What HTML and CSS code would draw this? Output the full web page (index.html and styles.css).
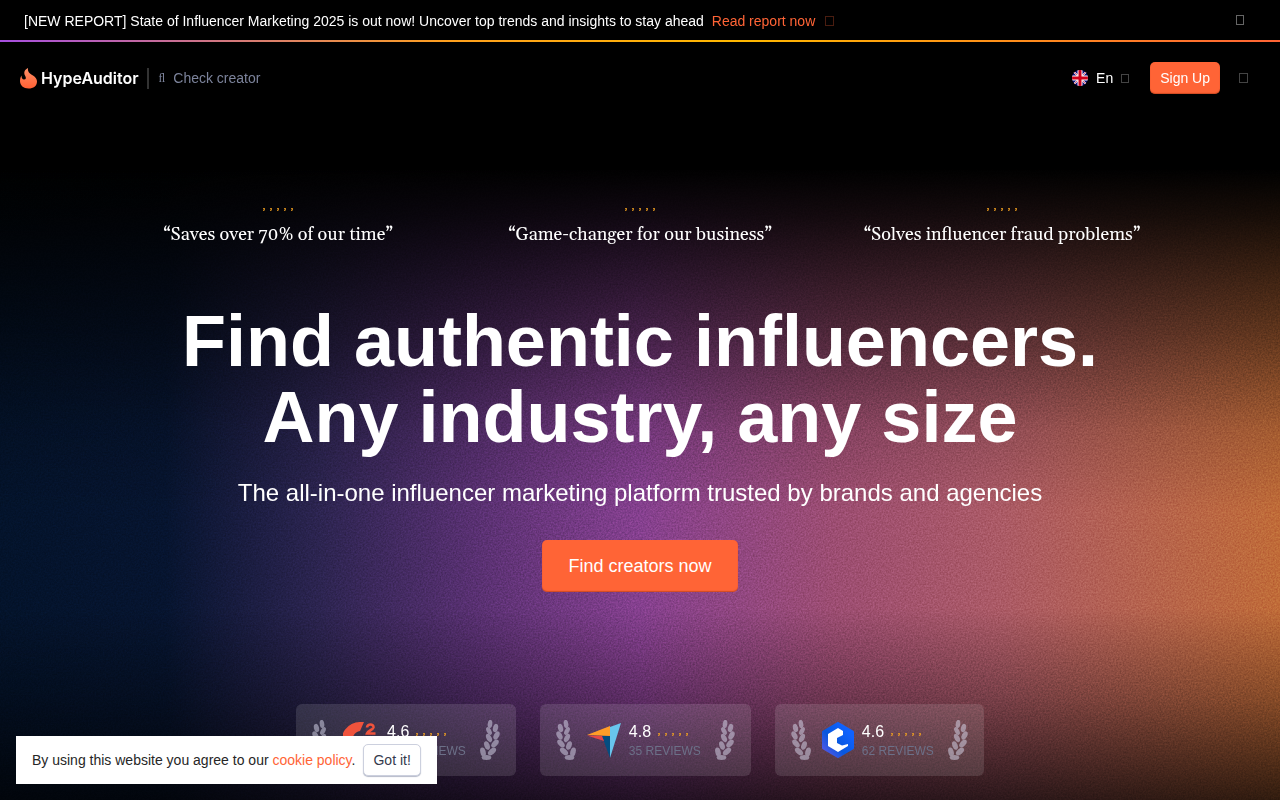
FILE: index.html
```html
<!DOCTYPE html>
<html lang="en">
<head>
    <meta charset="UTF-8">
    <meta name="viewport" content="width=device-width, initial-scale=1.0">
    <title>HypeAuditor</title>
    <link rel="stylesheet" href="styles.css">
</head>
<body>
    <!-- shared shapes -->
    <svg class="sprite" aria-hidden="true">
        <symbol id="laurel" viewBox="0 0 20 40">
            <ellipse cx="9.500" cy="4" rx="2.300" ry="4.200" transform="rotate(-8 9.500 4)"/>
            <ellipse cx="4" cy="8" rx="2.500" ry="4.200" transform="rotate(-15 4 8)"/>
            <ellipse cx="10.500" cy="11" rx="2.300" ry="4.200" transform="rotate(28 10.500 11)"/>
            <ellipse cx="3" cy="15.500" rx="2.600" ry="4.400" transform="rotate(-28 3 15.500)"/>
            <ellipse cx="10.500" cy="18" rx="2.500" ry="4.400" transform="rotate(28 10.500 18)"/>
            <ellipse cx="4.500" cy="23.500" rx="2.700" ry="4.600" transform="rotate(-42 4.500 23.500)"/>
            <ellipse cx="12.500" cy="25.500" rx="2.600" ry="4.400" transform="rotate(20 12.500 25.500)"/>
            <ellipse cx="7.500" cy="31.500" rx="2.800" ry="4.800" transform="rotate(-48 7.500 31.500)"/>
            <ellipse cx="16.500" cy="32" rx="2.700" ry="4.600" transform="rotate(14 16.500 32)"/>
            <ellipse cx="13" cy="37.500" rx="4.800" ry="2.500"/>
        </symbol>
        <symbol id="stars" viewBox="0 0 32 4">
            <path d="M1 0h2v2l-1 1h-1v-1h1l-1-1zM8 0h2v2l-1 1h-1v-1h1l-1-1zM15 0h2v2l-1 1h-1v-1h1l-1-1zM22 0h2v2l-1 1h-1v-1h1l-1-1zM29 0h2v2l-1 1h-1v-1h1l-1-1z"/>
        </symbol>
    </svg>

    <div class="promo">
        <p>[NEW REPORT] State of Influencer Marketing 2025 is out now! Uncover top trends and insights to stay ahead <a href="#">Read report now<span class="box box-orange"></span></a></p>
        <button class="icon-btn" aria-label="Close"><span class="box box-close"></span></button>
    </div>

    <header class="header">
        <a class="logo" href="#">
            <svg width="17" height="21" viewBox="0 0 17 21">
                <defs>
                    <linearGradient id="fire" x1="0" y1="0" x2="0" y2="1">
                        <stop offset="0" stop-color="#ff9068"/>
                        <stop offset="1" stop-color="#ff6033"/>
                    </linearGradient>
                </defs>
                <path fill="url(#fire)" d="M8 0C7.500 4 9.500 5.500 13 7.500C15.500 9 17 11 17 13.500C17 18 13.500 20.500 8.500 20.500C3.500 20.500 0 17.500 0 13C0 11 .5 9 1.500 7.500C1.500 10 2.500 11.500 4 11.500C6 11.500 6.500 10 5 7.500C3.500 4.500 4.500 1.500 8 0Z"/>
            </svg>
            <span>HypeAuditor</span>
        </a>
        <a class="check" href="#"><span class="search">&#xFB02;</span>Check creator</a>
        <nav class="nav">
            <button class="lang">
                <svg width="16" height="16" viewBox="0 0 16 16">
                    <clipPath id="round"><circle cx="8" cy="8" r="8"/></clipPath>
                    <g clip-path="url(#round)">
                        <path fill="#10107a" d="M0 0h16v16H0z"/>
                        <path stroke="#fff" stroke-width="1.800" d="M0 0l16 16M16 0L0 16"/>
                        <path stroke="#d80027" stroke-width=".6" d="M0 0l16 16M16 0L0 16"/>
                        <path stroke="#fff" stroke-width="5" d="M8 0v16M0 8h16"/>
                        <path stroke="#d0001a" stroke-width="3" d="M8 0v16M0 8h16"/>
                    </g>
                </svg>
                En<span class="box"></span>
            </button>
            <a class="btn signup" href="#">Sign Up</a>
            <button class="icon-btn" aria-label="Menu"><span class="box box-menu"></span></button>
        </nav>
    </header>

    <main class="hero">
        <svg class="grain" aria-hidden="true">
            <filter id="noise" color-interpolation-filters="sRGB">
                <feTurbulence type="fractalNoise" baseFrequency="0.6" numOctaves="2"/>
                <feColorMatrix type="matrix" values="1 0 0 0 0  1 0 0 0 0  1 0 0 0 0  0 0 0 0 1"/>
            </filter>
            <rect width="100%" height="100%" filter="url(#noise)"/>
        </svg>
        <div class="quotes">
            <div class="quote"><svg class="stars"><use href="#stars"/></svg><p>“Saves over 70% of our time”</p></div>
            <div class="quote"><svg class="stars"><use href="#stars"/></svg><p>“Game-changer for our business”</p></div>
            <div class="quote"><svg class="stars"><use href="#stars"/></svg><p>“Solves influencer fraud problems”</p></div>
        </div>
        <h1>Find authentic influencers.<br>Any industry, any size</h1>
        <p class="subtitle">The all-in-one influencer marketing platform trusted by brands and agencies</p>
        <a class="btn cta" href="#">Find creators now</a>
        <div class="badges">
            <div class="badge">
                <svg class="laurel"><use href="#laurel"/></svg>
                <svg class="brand brand-wide" viewBox="0 0 36 38">
                    <path fill="#f0533c" d="M21 1L17 10A9 9 0 1 0 24 26L28 33A18 18 0 1 1 17 1Z"/>
                    <path fill="none" stroke="#f0533c" stroke-width="2.600" d="M24 6.500C24 2.500 31 2.500 30.500 6.500C30 9 25 9.500 24 12.500H32.500"/>
                </svg>
                <div class="score"><p>4.6<svg class="stars"><use href="#stars"/></svg></p><small>246 REVIEWS</small></div>
                <svg class="laurel flip"><use href="#laurel"/></svg>
            </div>
            <div class="badge">
                <svg class="laurel"><use href="#laurel"/></svg>
                <svg class="brand" viewBox="0 0 34 38">
                    <path fill="#ff9d28" d="M0 14L23 5V15Z"/>
                    <path fill="#68c5ed" d="M34 2L23 6V37Z"/>
                    <path fill="#044d80" d="M15 15H23V37Z"/>
                    <path fill="#e54747" d="M0 14.500L15 15L17 20Z"/>
                </svg>
                <div class="score"><p>4.8<svg class="stars"><use href="#stars"/></svg></p><small>35 REVIEWS</small></div>
                <svg class="laurel flip"><use href="#laurel"/></svg>
            </div>
            <div class="badge">
                <svg class="laurel"><use href="#laurel"/></svg>
                <svg class="brand brand-narrow" viewBox="1 0 32 38">
                    <defs>
                        <linearGradient id="hex" x1="1" y1="0" x2="0" y2="1">
                            <stop offset=".2" stop-color="#0f62fe"/>
                            <stop offset=".6" stop-color="#0757dd"/>
                            <stop offset="1" stop-color="#6457e8"/>
                        </linearGradient>
                    </defs>
                    <path fill="url(#hex)" stroke="url(#hex)" stroke-width="3" stroke-linejoin="round" d="M17 2.500L31.500 11V27L17 35.500L2.500 27V11Z"/>
                    <path fill="#fff" d="M17 7L22 10V14L16 17V22L21 24.500L27 23V25L17 31L7 25V13Z"/>
                </svg>
                <div class="score"><p>4.6<svg class="stars"><use href="#stars"/></svg></p><small>62 REVIEWS</small></div>
                <svg class="laurel flip"><use href="#laurel"/></svg>
            </div>
        </div>
    </main>

    <div class="cookie">
        <p>By using this website you agree to our <a href="#">cookie policy</a>.</p>
        <button>Got it!</button>
    </div>
</body>
</html>
```
FILE: styles.css
```css
* {
    box-sizing: border-box;
}
body {
    margin: 0;
    background: #000;
    color: #fff;
    font-family: "Liberation Sans", Arial, sans-serif;
    font-size: 14px;
    line-height: 20px;
}
p, h1 {
    margin: 0;
}
a {
    color: #ff6436;
    text-decoration: none;
}
button {
    font: inherit;
    color: inherit;
    cursor: pointer;
}
.sprite {
    position: absolute;
    width: 0;
    height: 0;
}

/* Empty icon boxes */
.box {
    display: inline-block;
    width: 8px;
    height: 9px;
    border: 1px solid #444;
}
.box-orange {
    width: 9px;
    height: 10px;
    margin-left: 10px;
    border-color: #4a1d10;
}
.box-close {
    height: 10px;
    border-color: #666;
}
.box-menu {
    width: 9px;
    height: 10px;
}
.icon-btn {
    display: flex;
    padding: 0;
    background: none;
    border: none;
}

/* Top banner */
.promo {
    display: flex;
    align-items: center;
    justify-content: space-between;
    height: 42px;
    padding: 0 36px 0 24px;
    border-bottom: 2px solid;
    border-image: linear-gradient(90deg, #a64ee0, #ffa01e 35%, #ffb800 58%, #ff6436) 1;
}
.promo p {
    padding-top: 2px;
}
.promo a {
    margin-left: 4px;
}

/* Header */
.header {
    display: flex;
    align-items: center;
    height: 72px;
    padding: 0 32px 0 20px;
}
.logo {
    display: flex;
    align-items: center;
    gap: 4px;
    padding-right: 8px;
    border-right: 2px solid #333;
    color: #fff;
    font-family: Inter, sans-serif;
    font-size: 16px;
    font-weight: 600;
}
.check {
    display: flex;
    gap: 8px;
    margin-left: 10px;
    color: #7c839b;
}
.search {
    font-family: "Liberation Serif", serif;
    font-size: 12px;
}
.nav {
    display: flex;
    align-items: center;
    gap: 19px;
    margin-left: auto;
}
.lang {
    display: flex;
    align-items: center;
    gap: 8px;
    padding: 0 2px 0 0;
    background: none;
    border: none;
}
.btn {
    background: #ff6436;
    border-radius: 5px;
    box-shadow: inset 0 -1px 1px rgba(160, 50, 15, 0.5);
    color: #fff;
    text-align: center;
}
.signup {
    padding: 6px 10px;
}

/* Hero */
.hero {
    position: relative;
    display: flex;
    flex-direction: column;
    align-items: center;
    padding: 88px 24px 24px;
    background:
        linear-gradient(180deg, #000 8%, rgba(0, 0, 0, 0.88) 15%, rgba(0, 0, 0, 0.5) 32%, rgba(0, 0, 0, 0.15) 46%, rgba(0, 0, 0, 0) 58%, rgba(0, 0, 0, 0) 72%, rgba(0, 0, 0, 0.3) 85%, rgba(0, 0, 0, 0.75) 100%),
        linear-gradient(90deg, #03132b 0%, #06142f 13%, #2c2450 25%, #583071 37%, #85408f 50%, #9c4d72 65%, #ab5a66 78%, #b86548 92%, #c06b38 100%);
}
/* keeps the content above the grain */
.hero > * {
    position: relative;
}
.hero > .grain {
    position: absolute;
    inset: 0;
    width: 100%;
    height: 100%;
    opacity: 0.25;
    mix-blend-mode: overlay;
}
.quotes {
    display: grid;
    grid-template-columns: repeat(3, 1fr);
    width: 100%;
    max-width: 1086px;
}
.quote {
    display: flex;
    flex-direction: column;
    align-items: center;
    gap: 9px;
    padding-top: 6px;
    font-family: Gelasio, Georgia, "Liberation Serif", serif;
    font-size: 18px;
    line-height: 28px;
}
.stars {
    width: 32px;
    height: 4px;
    fill: #f0a020;
    opacity: 0.8;
}
h1 {
    margin-top: 54px;
    font-size: 72px;
    line-height: 76px;
    text-align: center;
}
.subtitle {
    margin-top: 22px;
    font-size: 24px;
    line-height: 32px;
    text-align: center;
}
.cta {
    margin-top: 31px;
    padding: 12px 26px;
    font-size: 18px;
    line-height: 28px;
}
.badges {
    display: flex;
    gap: 24px;
    margin-top: 112px;
}
.badge {
    display: flex;
    align-items: center;
    padding: 16px;
    background: rgba(255, 255, 255, 0.12);
    border-radius: 6px;
}
.laurel {
    width: 21px;
    height: 40px;
    fill: #dcdcf0;
    opacity: 0.5;
}
.flip {
    transform: scaleX(-1);
}
.brand {
    width: 34px;
    height: 38px;
    margin: 0 8px 0 10px;
}
.brand-wide {
    width: 36px;
}
.brand-narrow {
    width: 32px;
}
.score {
    margin-right: 13px;
    font-size: 16px;
}
.score p {
    line-height: 22px;
}
.score .stars {
    margin-left: 6px;
}
.score small {
    display: block;
    color: #6c7088;
    font-size: 12px;
    line-height: 16px;
}

/* Cookie notice */
.cookie {
    position: fixed;
    left: 16px;
    bottom: 16px;
    display: flex;
    align-items: center;
    gap: 8px;
    padding: 8px 16px;
    background: #fff;
    color: #262626;
}
.cookie button {
    height: 32px;
    padding: 0 9px;
    background: #fff;
    border: 1px solid #ccd0de;
    border-radius: 5px;
    box-shadow: 0 1px 1px #b5bac9;
    color: #343a4d;
}
```
